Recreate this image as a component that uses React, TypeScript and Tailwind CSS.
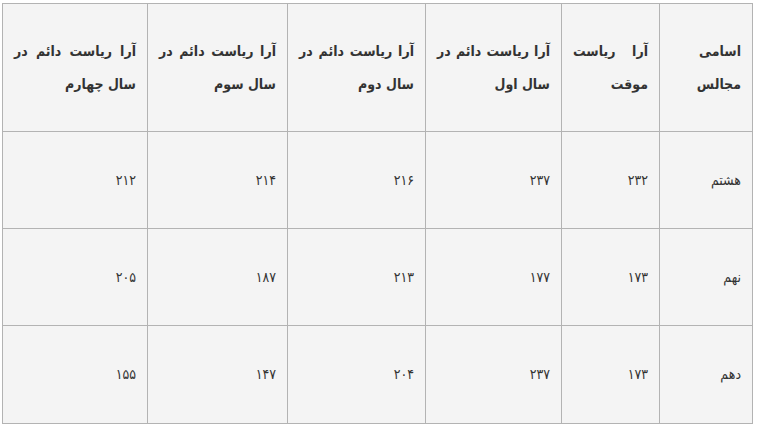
const header = [
  "اسامی مجالس",
  "آرا ریاست موقت",
  "آرا ریاست دائم در سال اول",
  "آرا ریاست دائم در سال دوم",
  "آرا ریاست دائم در سال سوم",
  "آرا ریاست دائم در سال چهارم",
];

const rows = [
  ["هشتم", "۲۳۲", "۲۳۷", "۲۱۶", "۲۱۴", "۲۱۲"],
  ["نهم", "۱۷۳", "۱۷۷", "۲۱۳", "۱۸۷", "۲۰۵"],
  ["دهم", "۱۷۳", "۲۳۷", "۲۰۴", "۱۴۷", "۱۵۵"],
];

const widths = ["w-[93px]", "w-[98px]", "w-[136px]", "w-[138px]", "w-[140px]", "w-[145px]"];

export default function App() {
  return (
    <div className="bg-white w-[757px] h-[426px] pt-[3px] pl-[2px]">
      <table
        dir="rtl"
        className="table-fixed border-collapse w-[751px] bg-[#f4f4f4] text-[#333] text-[14px] font-['DejaVu_Sans_Condensed','DejaVu_Sans',sans-serif]"
      >
        <colgroup>
          {widths.map((w, i) => (
            <col key={i} className={w} />
          ))}
        </colgroup>
        <thead>
          <tr className="h-[128px]">
            {header.map((h, i) => (
              <th
                key={i}
                className="border border-[#b3b3b3] px-[11px] align-middle text-justify font-bold leading-[33px]"
              >
                {h}
              </th>
            ))}
          </tr>
        </thead>
        <tbody>
          {rows.map((r, ri) => (
            <tr key={ri} className={ri === 2 ? "h-[98px]" : "h-[97px]"}>
              {r.map((c, ci) => (
                <td
                  key={ci}
                  className="border border-[#b3b3b3] px-[11px] align-middle text-right"
                >
                  {c}
                </td>
              ))}
            </tr>
          ))}
        </tbody>
      </table>
    </div>
  );
}
